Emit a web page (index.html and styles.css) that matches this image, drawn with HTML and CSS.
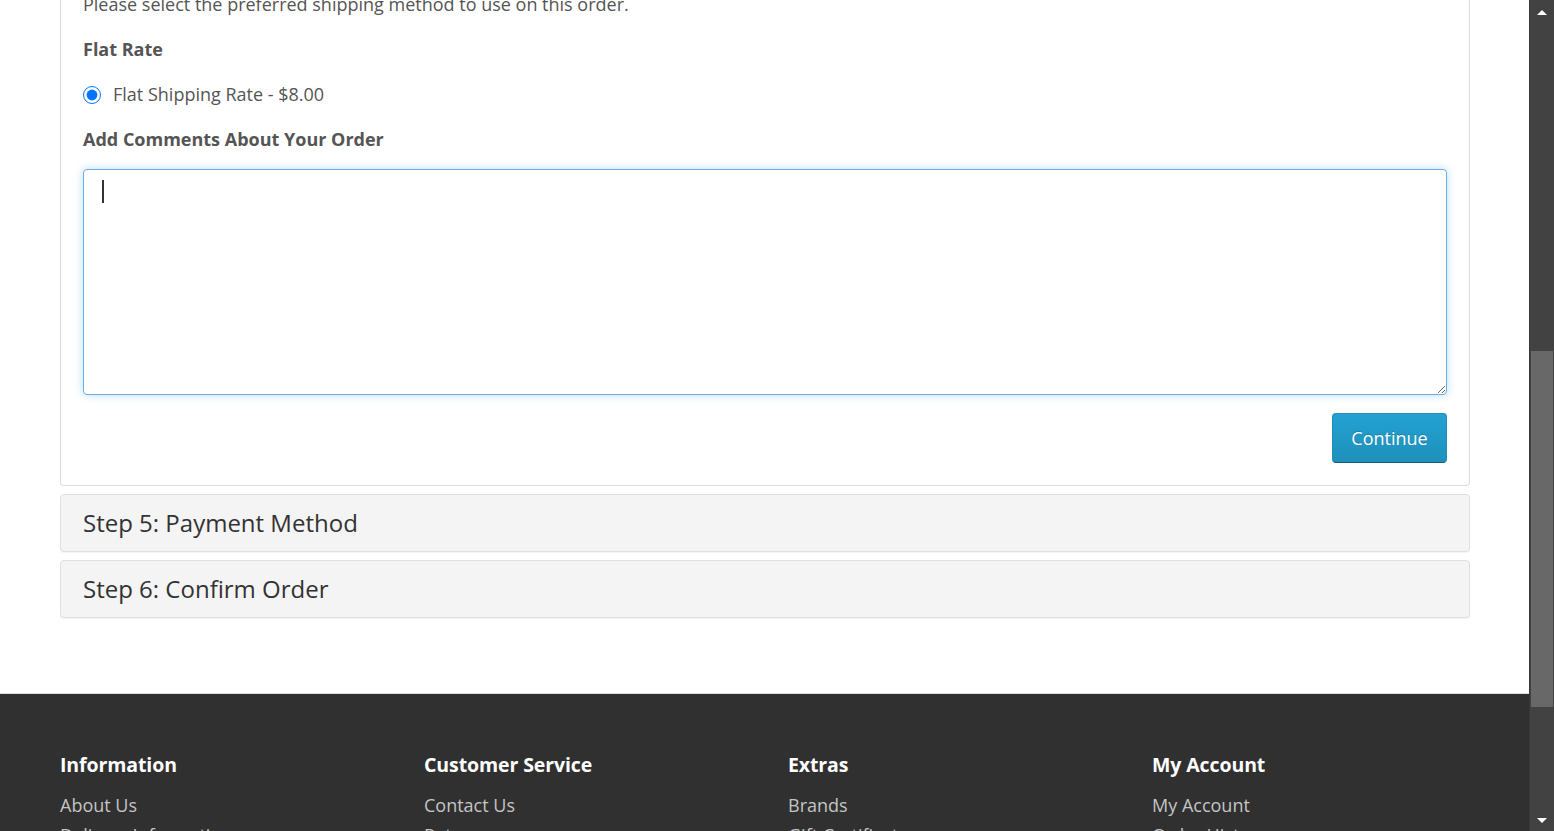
FILE: index.html
```html
<!DOCTYPE html>
<html lang="en">
<head>
<meta charset="utf-8">
<title>Checkout</title>
<link rel="stylesheet" href="styles.css">
</head>
<body>
<div class="screen">
  <div class="viewport">
    <main class="content">
      <section class="panel">
        <p class="intro">Please select the preferred shipping method to use on this order.</p>
        <p class="label">Flat Rate</p>
        <label class="radio-row">
          <input type="radio" name="shipping" checked>
          <span>Flat Shipping Rate - $8.00</span>
        </label>
        <p class="label">Add Comments About Your Order</p>
        <div class="comment-wrap">
          <textarea class="comment" rows="8"></textarea>
          <span class="caret"></span>
        </div>
        <div class="actions">
          <button class="btn-primary" type="button">Continue</button>
        </div>
      </section>
      <div class="step"><h2>Step 5: Payment Method</h2></div>
      <div class="step"><h2>Step 6: Confirm Order</h2></div>
    </main>
    <footer class="footer">
      <div class="footer-cols">
        <div class="col">
          <h5>Information</h5>
          <ul>
            <li><a href="#">About Us</a></li>
            <li><a href="#">Delivery Information</a></li>
          </ul>
        </div>
        <div class="col">
          <h5>Customer Service</h5>
          <ul>
            <li><a href="#">Contact Us</a></li>
            <li><a href="#">Returns</a></li>
          </ul>
        </div>
        <div class="col">
          <h5>Extras</h5>
          <ul>
            <li><a href="#">Brands</a></li>
            <li><a href="#">Gift Certificates</a></li>
          </ul>
        </div>
        <div class="col">
          <h5>My Account</h5>
          <ul>
            <li><a href="#">My Account</a></li>
            <li><a href="#">Order History</a></li>
          </ul>
        </div>
      </div>
    </footer>
  </div>
  <div class="scrollbar">
    <div class="sb-btn"><span class="tri-up"></span></div>
    <div class="sb-track"><div class="sb-thumb"></div></div>
    <div class="sb-btn"><span class="tri-down"></span></div>
  </div>
</div>
</body>
</html>
```
FILE: styles.css
```css
* { box-sizing: border-box; }
html, body { margin: 0; padding: 0; }
body {
  font-family: "Open Sans", "Liberation Sans", sans-serif;
  font-size: 18px;
  line-height: 25px;
  color: #555;
  background: #fff;
}
.screen {
  display: flex;
  height: 831px;
  overflow: hidden;
}
.viewport {
  flex: 1;
  overflow: hidden;
  min-width: 0;
}
.content {
  width: 1410px;
  margin-left: 60px;
  margin-top: -30px;
}
.panel {
  border: 1px solid #ddd;
  border-top: 0;
  border-radius: 0 0 4px 4px;
  padding: 22px 22px 22px;
}
.panel p { margin: 0; }
.intro { margin-bottom: 20px !important; }
.label {
  font-weight: 700;
  margin-bottom: 20px !important;
}
.radio-row {
  display: flex;
  align-items: center;
  gap: 12px;
  margin-bottom: 20px;
}
.radio-row input {
  width: 18px;
  height: 18px;
  margin: 0;
  accent-color: #0075ff;
}
.comment-wrap {
  position: relative;
  margin-top: -3px;
}
.comment {
  display: block;
  width: 100%;
  height: 226px;
  border: 1px solid #66afe9;
  border-radius: 4px;
  box-shadow: 0 0 8px rgba(102, 175, 233, 0.45);
  outline: none;
  font: inherit;
  padding: 8px 12px;
  resize: vertical;
}
.caret {
  position: absolute;
  left: 19px;
  top: 11px;
  width: 2px;
  height: 23px;
  background: #333;
}
.actions {
  display: flex;
  justify-content: flex-end;
  margin-top: 18px;
}
.btn-primary {
  width: 115px;
  height: 50px;
  font: inherit;
  font-size: 18px;
  color: #fff;
  background: linear-gradient(#23a1d1, #1f90bb);
  border: 1px solid #1f90bb;
  border-bottom-color: #145e7a;
  border-radius: 4px;
  text-shadow: 0 -1px 0 rgba(0,0,0,0.2);
}
.step {
  margin-top: 8px;
  height: 58px;
  background: #f4f4f4;
  border: 1px solid #e0e0e0;
  border-radius: 4px;
  box-shadow: 0 1px 1px rgba(0,0,0,0.05);
  display: flex;
  align-items: center;
  padding: 0 22px;
}
.step h2 {
  margin: 0;
  font-size: 24px;
  font-weight: 400;
  color: #333;
  line-height: 30px;
}
.footer {
  margin-top: 75px;
  border-top: 1px solid #ddd;
  background: #303030;
  padding-top: 59px;
  height: 200px;
}
.footer-cols {
  display: grid;
  grid-template-columns: repeat(4, 364px);
  padding-left: 60px;
}
.footer h5 {
  margin: 0 0 13px;
  font-size: 19.5px;
  line-height: 24px;
  font-weight: 700;
  color: #fff;
  letter-spacing: -0.1px;
}
.footer ul {
  list-style: none;
  margin: 0;
  padding: 0;
}
.footer li { line-height: 30px; }
.footer a {
  color: #c4c4c4;
  text-decoration: none;
  font-size: 18px;
}
.scrollbar {
  width: 25px;
  flex: none;
  background: #424242;
  border-left: 1px solid #383838;
  display: flex;
  flex-direction: column;
}
.sb-btn {
  height: 17px;
  display: flex;
  align-items: center;
  justify-content: center;
}
.tri-up, .tri-down {
  width: 0;
  height: 0;
  border-left: 5px solid transparent;
  border-right: 5px solid transparent;
}
.tri-up { border-bottom: 5px solid #fff; margin-top: 8px; }
.tri-down { border-top: 5px solid #fff; margin-bottom: 5px; }
.sb-track {
  flex: 1;
  padding: 334px 1px 0 1px;
}
.sb-thumb {
  height: 356px;
  background: #686868;
}
```
